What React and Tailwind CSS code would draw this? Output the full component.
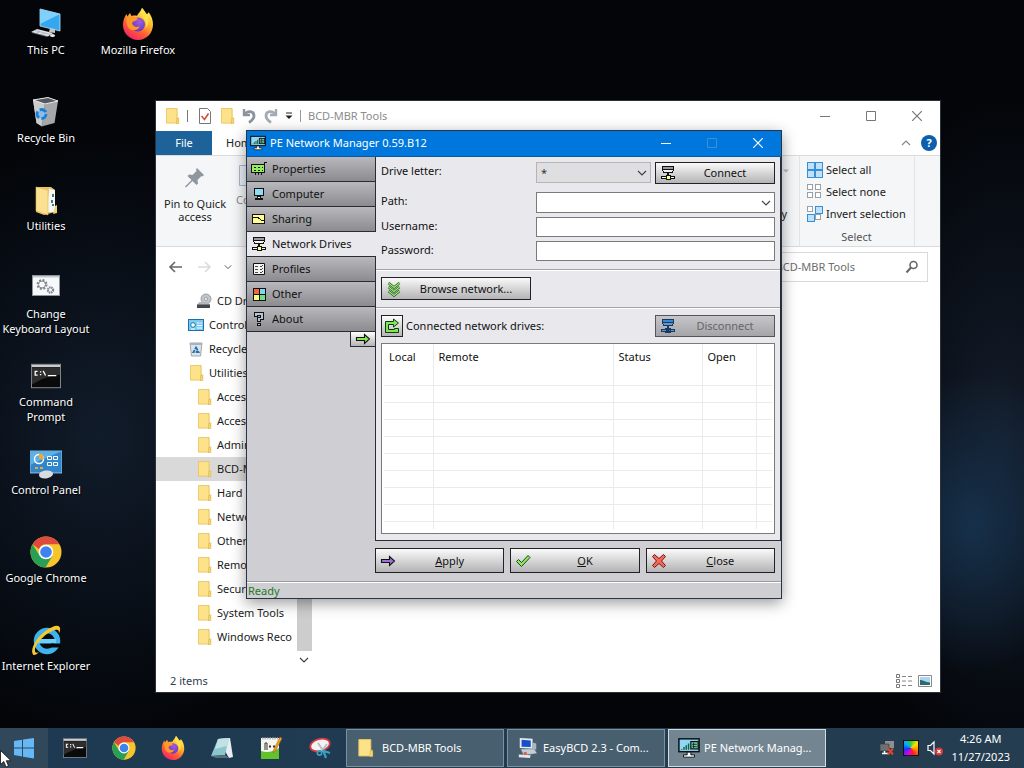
import React from 'react'

/* ---------- shared icons ---------- */

function FolderIcon({ className = 'w-4 h-4' }) {
  return (
    <svg viewBox="0 0 16 16" className={className}>
      <path d="M3 .5h10.500v11H15V15H3z" fill="#f3d36f" />
      <path d="M2.500.500h10.500v14.600h-10.500z" fill="#fde28a" stroke="#e6c35c" strokeWidth=".8" />
      <path d="M13 10h1.800v5.500h-2.600z" fill="#f7d774" stroke="#d9b44c" strokeWidth=".6" />
    </svg>
  )
}

function FirefoxIcon({ className }) {
  return (
    <svg viewBox="0 0 32 32" className={className}>
      <defs>
        <linearGradient id="ffBody" x1=".8" y1=".1" x2=".25" y2="1">
          <stop offset="0" stopColor="#fff14f" />
          <stop offset=".35" stopColor="#ffae2b" />
          <stop offset=".65" stopColor="#ff5a36" />
          <stop offset="1" stopColor="#f0206e" />
        </linearGradient>
        <radialGradient id="ffCore" cx=".6" cy=".3" r=".8">
          <stop offset="0" stopColor="#a05be0" />
          <stop offset="1" stopColor="#5a35b8" />
        </radialGradient>
      </defs>
      <path
        d="M20 0c2 2 3 4 4.500 6 1.500-.2 2-1 2-2 3 4 4.500 8 4.500 12.500C31 25 24.500 32 16 32S1 25 1 17c0-5 1.500-8 3.500-11l.8 2.500L8 5l1.500 3c2-.6 4-.6 5.500-.2C16.500 5 19 3 20 0z"
        fill="url(#ffBody)"
      />
      <circle cx="16" cy="16.500" r="7" fill="url(#ffCore)" />
      <path d="M5 9c3-1 8-1 11 2-2 2-5 2-6 4 1 4 5 5 8 3-2 5-9 6-12 1-1.500-3-2-7-1-10z" fill="#ff9a28" />
      <path d="M20 0c-2 5-1 7 1 10 3 3 4 7 2 11 5-5 4-12 1.500-15C23 4 22 2 20 0z" fill="#ffe14a" />
    </svg>
  )
}

function ChromeIcon({ className }) {
  return (
    <svg viewBox="0 0 32 32" className={className}>
      <circle cx="16" cy="16" r="15.500" fill="#f7c52b" />
      <path d="M2.600 8.200 A15.500 15.500 0 0 0 15.500 31.500 L22.500 19.700 L9.500 19.500z" fill="#27a055" />
      <path d="M2.600 8.200A15.500 15.500 0 0 1 29.400 8.200H16a7.500 7.500 0 0 0-7 5z" fill="#de4b3e" />
      <circle cx="16" cy="16" r="7.300" fill="#fff" />
      <circle cx="16" cy="16" r="5.800" fill="#3f83ee" />
    </svg>
  )
}

function ConsoleIcon({ className }) {
  return (
    <svg viewBox="0 0 32 26" className={className}>
      <rect x=".5" y=".5" width="31" height="25" fill="#0a0a0a" stroke="#8b8f92" />
      <rect x="1" y="1" width="30" height="2.500" fill="#c9cdd0" />
      <path d="M1 4h30v8C20 12 10 17 1 22z" fill="#2e2e2e" />
      <path d="M7 8H4.500v4H7M9.500 8.500H11M9.500 11.500H11M13 7.500l2.500 5M18 12.500h9" stroke="#fff" strokeWidth="1.400" fill="none" />
    </svg>
  )
}

function NetMonitorIcon({ className }) {
  return (
    <svg viewBox="0 0 24 22" className={className}>
      <rect x="1" y="1" width="22" height="14" fill="#8ed8f5" stroke="#0a0f14" strokeWidth="1.600" />
      <path d="M4 12v1M6.500 10v3M9 8v5M11.500 6v7" stroke="#175f3e" strokeWidth="1.600" />
      <rect x="14" y="4" width="8" height="8" fill="#6fc79a" stroke="#0a0f14" strokeWidth="1.300" />
      <path d="M15.500 7h5M15.500 9.500h5M17 5v6" stroke="#0a0f14" strokeWidth=".8" />
      <path d="M10 15.500h4v3h4v2.500H6v-2.500h4z" fill="#fff" stroke="#0a0f14" />
    </svg>
  )
}

function NetDriveIcon({ blue }) {
  const fill = blue ? '#5b9bd5' : '#f2f2f2'
  const line = blue ? '#173a63' : '#111'
  return (
    <svg viewBox="0 0 16 16" className="w-4 h-4 shrink-0" shapeRendering="crispEdges">
      <path d="M2.500 1.500h11v3h-11z" fill={blue ? '#3f86cc' : '#9a9a9e'} stroke={line} />
      <path d="M2.500 4.500h11l-1 3h-9z" fill={fill} stroke={line} />
      <path d="M8 8v3" stroke={line} strokeWidth="2" />
      <path d="M1.500 11.500h13v2h-13z" fill={fill} stroke={line} />
      <path d="M6.500 10.500h4v4h-4z" fill={blue ? '#3d6fb5' : '#ffff90'} stroke={line} />
      {blue && <path d="M5 10l6 5M11 10l-6 5" stroke={line} />}
    </svg>
  )
}

function ArrowIcon({ fill, className = 'w-4 h-4' }) {
  return (
    <svg viewBox="0 0 16 16" className={className}>
      <path d="M1.500 6.500h8V3.500L14.500 8l-5 4.500v-3h-8z" fill={fill} stroke="#111" strokeWidth="1.100" />
    </svg>
  )
}

function Chevron({ className = 'w-2.5 h-2.5', color = '#444' }) {
  return (
    <svg viewBox="0 0 10 10" className={className}>
      <path d="M1 3l4 4 4-4" fill="none" stroke={color} strokeWidth="1.200" />
    </svg>
  )
}

/* ---------- desktop ---------- */

function PcIcon() {
  return (
    <svg viewBox="0 0 32 32" className="w-8 h-8">
      <path d="M10 1l20 5v17L10 18z" fill="#35a7ee" stroke="#bfe3f7" strokeWidth=".8" />
      <path d="M10 1l20 5-20 10z" fill="#7fd0fa" />
      <path d="M20 20l5 1v4l-6-1z" fill="#bfc5cb" />
      <path d="M1 24l6-3 16 4-5 3.500z" fill="#dfe2e6" />
      <path d="M2 24.500l15 4M5 22.500l15 4M6 25.500l4-2M11 27l4-2" stroke="#9aa0a8" strokeWidth=".6" />
      <ellipse cx="22.500" cy="27.500" rx="2.500" ry="1.500" fill="#e8eaec" />
    </svg>
  )
}

function BinIcon({ className = 'w-8 h-8' }) {
  return (
    <svg viewBox="0 0 32 32" className={className}>
      <path d="M3 4l15-2.500L28 5l-3.500 22-13 3.500-5-3.500z" fill="#a4a8ac" />
      <path d="M3 4l12 3.500-3 22.500-5.500-3z" fill="#c9ccce" />
      <path d="M3 4l15-2.500L28 5 15 8z" fill="#55595e" stroke="#e8eaec" strokeWidth="1" />
      <path d="M15 8l-3 22" stroke="#8e9296" strokeWidth=".8" />
      <circle cx="11.500" cy="18" r="4.500" fill="#8dbde6" stroke="#1a7fd4" strokeWidth="2.800" strokeDasharray="7 2.400" />
    </svg>
  )
}

function UtilitiesIcon() {
  return (
    <svg viewBox="0 0 32 32" className="w-8 h-8">
      <path d="M6 3h15l4 3v22l-11 3-8-3z" fill="#e8c466" />
      <path d="M19 5l6 1v22h-8z" fill="#f4f6f8" />
      <path d="M22 10h2v3h-2zM21 16h2v3h-2zM22 20h2v2h-2z" fill="#3d8067" />
      <path d="M6 3l12 3v25L6 27z" fill="#fbe092" stroke="#dcb550" strokeWidth=".6" />
      <path d="M25 22l2-1v8l-4 1z" fill="#f5d270" />
    </svg>
  )
}

function KeyboardLayoutIcon() {
  return (
    <svg viewBox="0 0 32 32" className="w-8 h-8">
      <rect x="2.500" y="3.500" width="27" height="20" fill="#f7f8f9" stroke="#8d949b" />
      <rect x="3" y="4" width="26" height="1.500" fill="#c4cad0" />
      <circle cx="12" cy="12.500" r="4.500" fill="none" stroke="#7e868e" strokeWidth="2" strokeDasharray="2 1.530" />
      <circle cx="12" cy="12.500" r="3.500" fill="none" stroke="#7e868e" />
      <circle cx="20.500" cy="18" r="2.600" fill="none" stroke="#7e868e" strokeWidth="2.200" strokeDasharray="1.500 .6" />
    </svg>
  )
}

function ControlPanelIcon() {
  return (
    <svg viewBox="0 0 32 32" className="w-8 h-8">
      <path d="M0 3h32v22H0z" fill="#2f86cc" stroke="#a5d3ef" strokeWidth=".8" />
      <path d="M0 3h32L0 17z" fill="#5cb0e6" />
      <circle cx="9" cy="11" r="4.500" fill="none" stroke="#fff" strokeWidth="1.400" />
      <path d="M9 11V5.500A5.500 5.500 0 0 1 14 11z" fill="#f5a623" />
      <path d="M17.500 8.500h4v3h-4zM23.500 8.500h4v3h-4zM17.500 14.500h4v3h-4zM23.500 14.500h4v3h-4z" fill="none" stroke="#fff" />
      <path d="M5 20h3M10 20h3" stroke="#f5a623" strokeWidth="2" />
      <path d="M9 27c0-3 4-4.500 8-4.500S23 24 23 26s-4 4.500-8 4.500-6-1.500-6-3.500z" fill="#d9dcdf" />
    </svg>
  )
}

function IeIcon() {
  return (
    <svg viewBox="0 0 32 32" className="w-8 h-8">
      <circle cx="17" cy="17" r="10.500" fill="none" stroke="#3fb4ec" strokeWidth="5.500" />
      <path d="M8 15h18v4.500H8z" fill="#6dd0f8" />
      <path d="M21 19.500h10v4H20z" fill="#06080c" />
      <path d="M3.500 31C-1 27 6 13 17 6c6-4 12-6 13-2 .5 2-.5 4-1 5 0-3-1-4-4-3C17 8 4 20 5 27c0 2 2 2 4 1-2 2-4 3.500-5.500 3z" fill="#f7c92d" />
    </svg>
  )
}

function DesktopIcon({ icon, label }) {
  return (
    <button className="w-[92px] h-[88px] pt-2 flex flex-col items-center text-white [text-shadow:1px_1px_1px_#000]">
      {icon}
      <span className="mt-0.5 leading-[15px] text-center whitespace-pre-line">{label}</span>
    </button>
  )
}

/* ---------- explorer window ---------- */

const navItems = [
  { label: 'CD Drive', icon: 'cd', deep: true },
  { label: 'Control', icon: 'panel' },
  { label: 'Recycle', icon: 'bin' },
  { label: 'Utilities', icon: 'folder' },
  { label: 'Access', icon: 'folder', deep: true },
  { label: 'Access', icon: 'folder', deep: true },
  { label: 'Admin', icon: 'folder', deep: true },
  { label: 'BCD-MBR', icon: 'folder', deep: true, selected: true },
  { label: 'Hard', icon: 'folder', deep: true },
  { label: 'Netwo', icon: 'folder', deep: true },
  { label: 'Other', icon: 'folder', deep: true },
  { label: 'Remo', icon: 'folder', deep: true },
  { label: 'Secur', icon: 'folder', deep: true },
  { label: 'System Tools', icon: 'folder', deep: true },
  { label: 'Windows Reco', icon: 'folder', deep: true },
]

function NavIcon({ name }) {
  if (name === 'cd') {
    return (
      <svg viewBox="0 0 16 16" className="w-4 h-4">
        <circle cx="10" cy="6" r="5" fill="#c3c6c9" stroke="#8a8f94" strokeWidth=".8" />
        <circle cx="10" cy="6" r="1.500" fill="#fff" stroke="#8a8f94" strokeWidth=".8" />
        <path d="M3 9h9l2 3H1z" fill="#b5b9bd" />
        <path d="M1 11.500h13V15H1z" fill="#44484c" />
      </svg>
    )
  }
  if (name === 'panel') {
    return (
      <svg viewBox="0 0 16 16" className="w-4 h-4">
        <rect x=".5" y="2.500" width="15" height="11" fill="#7cc9f2" stroke="#1c6fa8" />
        <circle cx="5" cy="8" r="2.300" fill="#fff" stroke="#1c7c9c" />
        <path d="M9 6h2.500M12.500 6H14M9 8.500h5M9 11h5M3 12h4" stroke="#fff" />
      </svg>
    )
  }
  if (name === 'bin') {
    return (
      <svg viewBox="0 0 16 16" className="w-4 h-4">
        <path d="M2 2h12l-1.500 13h-9z" fill="#dce3ea" stroke="#8b949c" strokeWidth=".8" />
        <path d="M2 2h12l-.3 2H2.300z" fill="#a9b2ba" />
        <path d="M8 6.500L10.500 11h-5z" fill="none" stroke="#2370b5" strokeWidth="1.800" strokeDasharray="3.500 1" />
      </svg>
    )
  }
  return <FolderIcon />
}

function WindowControls({ color, dimMax, height }) {
  const cls = `w-[46px] flex items-center justify-center ${height}`
  return (
    <div className="flex ml-auto">
      <button className={cls} aria-label="Minimize">
        <svg viewBox="0 0 10 10" className="w-2.5 h-2.5"><path d="M0 5.500h10" stroke={color} /></svg>
      </button>
      <button className={cls} aria-label="Maximize">
        <svg viewBox="0 0 10 10" className="w-2.5 h-2.5">
          <path d="M.5.5h9v9h-9z" fill="none" stroke={dimMax ? '#3b8fd9' : color} />
        </svg>
      </button>
      <button className={cls} aria-label="Close">
        <svg viewBox="0 0 10 10" className="w-2.5 h-2.5"><path d="M0 0l10 10M10 0L0 10" stroke={color} strokeWidth="1.200" /></svg>
      </button>
    </div>
  )
}

function Squares({ filled }) {
  const cells = [[1, 1], [9, 1], [1, 9], [9, 9]]
  return (
    <svg viewBox="0 0 16 16" className="w-4 h-4">
      {cells.map(([x, y], i) => (
        <rect
          key={i}
          x={x - 0.5}
          y={y - 0.5}
          width={filled[i] ? 7 : 5}
          height={filled[i] ? 7 : 5}
          fill={filled[i] ? '#bfe1fb' : '#fff'}
          stroke={filled[i] ? '#3a8fd0' : '#9aa0a6'}
        />
      ))}
    </svg>
  )
}

function Explorer() {
  return (
    <section className="absolute left-[156px] top-[101px] w-[784px] h-[591px] flex flex-col bg-white text-[#222] shadow-[0_0_0_1px_#2c3038]">
      {/* Title bar */}
      <div className="flex items-center h-[30px] pl-2 shrink-0">
        <FolderIcon />
        <span className="w-px h-3 bg-[#777] ml-[7px] mr-[9px]" />
        <div className="flex items-center gap-1.5">
          <svg viewBox="0 0 16 16" className="w-4 h-4">
            <path d="M2.500.5h8l3 3v12h-11z" fill="#fff" stroke="#777" />
            <path d="M4.500 8l3 3.500 4-6" fill="none" stroke="#cf4a3c" strokeWidth="1.500" />
          </svg>
          <FolderIcon />
          <svg viewBox="0 0 16 16" className="w-4 h-4">
            <path d="M3 1v6h6" fill="none" stroke="#8b939e" strokeWidth="2.400" />
            <path d="M3.500 6.500C7 2 13 3 13 8c0 3-2 4.500-5 6.500" fill="none" stroke="#8b939e" strokeWidth="2.800" />
          </svg>
          <svg viewBox="0 0 16 16" className="w-4 h-4">
            <path d="M13 1v6H7" fill="none" stroke="#a4abb4" strokeWidth="2.400" />
            <path d="M12.500 6.500C9 2 3 3 3 8c0 3 2 4.500 5 6.500" fill="none" stroke="#a4abb4" strokeWidth="2.800" />
          </svg>
          <svg viewBox="0 0 8 8" className="w-2 h-2">
            <path d="M1 1h6" stroke="#222" />
            <path d="M.5 3.500h7L4 7z" fill="#222" />
          </svg>
        </div>
        <span className="w-px h-3 bg-[#999] mx-[7px]" />
        <h1 className="text-[#8c8c8c]">BCD-MBR Tools</h1>
        <WindowControls color="#777" height="h-[30px]" />
      </div>

      {/* Ribbon tabs */}
      <div className="flex items-center h-6 shrink-0">
        <button className="w-14 h-6 bg-[#1d6299] text-white">File</button>
        <button className="px-3.5 h-6">Home</button>
        <div className="flex items-center gap-2.5 ml-auto pr-[3px]">
          <Chevron className="w-2.5 h-2.5 rotate-180" color="#888" />
          <button className="w-4 h-4 rounded-full bg-[#0d5fae] text-white font-bold leading-4" aria-label="Help">?</button>
        </div>
      </div>

      {/* Ribbon */}
      <div className="flex h-[92px] shrink-0 bg-[#f5f6f7] border-y border-[#dadbdc]">
        <button className="w-[78px] pt-2.5 flex flex-col items-center leading-[13px]">
          <svg viewBox="0 0 24 24" className="w-6 h-6 mb-[7px]">
            <path d="M14 2l7 7-1.500 1.500-1-.5-4 4 .5 3.500L13.500 19 9.500 15 3 21.500l-1-1L8.500 14 4.500 10 6 8.500l3.500.500 4-4-.5-1.500z" fill="#8e979f" />
          </svg>
          Pin to Quick<br />access
        </button>
        <button className="pl-0.5 pt-2 flex flex-col items-start text-[#888]">
          <svg viewBox="0 0 20 24" className="w-5 h-6 ml-0.5 mb-1"><path d="M1.500 1.500h13l4 4v16h-17z" fill="#eaf0f6" stroke="#a9b8c8" /></svg>
          Copy
        </button>
        <div className="ml-auto w-[14px] pt-2 flex flex-col items-end justify-between pb-6">
          <svg viewBox="0 0 8 8" className="w-1.5 h-1.5 mt-1 -mr-0.5"><path d="M0 2h8L4 6z" fill="#bbb" /></svg>
          <span>History</span>
        </div>
        <div className="ml-3 w-[116px] border-x border-[#e2e3e4] pt-[3px] pl-[7px]">
          <button className="flex items-center gap-[3px] h-[22px]"><Squares filled={[1, 1, 1, 1]} />Select all</button>
          <button className="flex items-center gap-[3px] h-[22px]"><Squares filled={[0, 0, 0, 0]} />Select none</button>
          <button className="flex items-center gap-[3px] h-[22px]"><Squares filled={[0, 1, 1, 0]} />Invert selection</button>
          <div className="pt-1 pr-2 text-center text-[#555]">Select</div>
        </div>
        <div className="w-[25px]" />
      </div>

      {/* Address row */}
      <div className="flex items-center h-10 shrink-0 pl-3 pr-3">
        <svg viewBox="0 0 16 16" className="w-4 h-4 mr-3">
          <path d="M14 8H2M7 3L2 8l5 5" fill="none" stroke="#666" strokeWidth="1.600" />
        </svg>
        <svg viewBox="0 0 16 16" className="w-4 h-4 mr-3">
          <path d="M2 8h12M9 3l5 5-5 5" fill="none" stroke="#dcdcdc" strokeWidth="1.600" />
        </svg>
        <Chevron className="w-2 h-2" color="#555" />
        <div className="ml-auto flex items-center w-[216px] h-[30px] border border-[#d9d9d9] pl-[25px] pr-2">
          <input type="search" aria-label="Search BCD-MBR Tools" placeholder="Search BCD-MBR Tools" className="flex-1 min-w-0 outline-none placeholder:text-[#6d6d6d]" />
          <svg viewBox="0 0 14 14" className="w-3.5 h-3.5">
            <circle cx="8.500" cy="5" r="3.500" fill="none" stroke="#666" strokeWidth="1.600" />
            <path d="M6 7.500L1.500 12.500" stroke="#666" strokeWidth="2" />
          </svg>
        </div>
      </div>

      {/* Body */}
      <div className="flex flex-1 min-h-0">
        <ul className="w-[140px] pt-0.5 text-[#1b1b1b]">
          {navItems.map((item, i) => (
            <li
              key={i}
              className={`flex items-center gap-[5px] h-6 whitespace-nowrap ${item.deep ? 'pl-10' : 'pl-8'} ${item.selected ? 'bg-[#d9d9d9]' : ''}`}
            >
              <span className="shrink-0"><NavIcon name={item.icon} /></span>
              {item.label}
            </li>
          ))}
        </ul>
        <div className="w-4 flex flex-col items-center pt-4">
          <div className="w-[15px] flex-1 bg-[#cdcdcd]" />
          <Chevron className="w-2.5 h-[18px]" color="#444" />
        </div>
      </div>

      {/* Status bar */}
      <div className="flex items-center h-[23px] shrink-0 pl-[14px] pr-2 text-[#333c50]">
        2 items
        <svg viewBox="0 0 16 14" className="w-4 h-3.5 ml-auto mr-1.5">
          <path d="M.5.500h3v3h-3zM.5 5.500h3v3h-3zM.5 10.500h3v3h-3z" fill="none" stroke="#777" />
          <path d="M6 2.500h4M12 2.500h4M6 7h4M12 7h4M6 11.500h4M12 11.500h4" stroke="#888" />
        </svg>
        <svg viewBox="0 0 14 12" className="w-3.5 h-3">
          <path d="M.5.500h13v11H.5z" fill="#fff" stroke="#888" />
          <path d="M2 2h10v8H2z" fill="#a9d5f2" />
          <path d="M2 5c3 0 5 2 10 2.500V10H2z" fill="#2c6b6f" />
        </svg>
      </div>
    </section>
  )
}

/* ---------- network manager dialog ---------- */

const tabIcons = {
  Properties: (
    <svg viewBox="0 0 16 16" className="w-4 h-4" shapeRendering="crispEdges">
      <path d="M.5 3.500h13v8H.5z" fill="#90ee60" stroke="#111" />
      <path d="M13.500 3.500v-2h2M4.500 12v2M7.500 12v2M10.500 12v2M3 6.500h2M7 6.500h2M11 6.500h1M3 9.500h2M7 9.500h2M11 9.500h1" stroke="#111" fill="none" />
    </svg>
  ),
  Computer: (
    <svg viewBox="0 0 16 16" className="w-4 h-4" shapeRendering="crispEdges">
      <path d="M3.500 2.500h9v7h-9z" fill="#8fdcf5" stroke="#111" />
      <path d="M6.500 10.500h3v2h-3zM4.500 12.500h7v1h-7z" fill="#fff" stroke="#111" />
    </svg>
  ),
  Sharing: (
    <svg viewBox="0 0 16 16" className="w-4 h-4" shapeRendering="crispEdges">
      <path d="M1.500 3.500h12v9h-12z" fill="#ffff90" stroke="#111" />
      <path d="M2 6.500h5l4 3h3" fill="none" stroke="#111" />
    </svg>
  ),
  'Network Drives': <NetDriveIcon />,
  Profiles: (
    <svg viewBox="0 0 16 16" className="w-4 h-4">
      <path d="M2.500 2.500h11v11h-11z" fill="#f4f4f0" stroke="#111" />
      <path d="M4 5.500h3M4 8.500h3M4 11.500h3M9 5l1 1 2-2M9 8l1 1 2-2M9 11l1 1 2-2" fill="none" stroke="#333" strokeWidth=".9" />
    </svg>
  ),
  Other: (
    <svg viewBox="0 0 16 16" className="w-4 h-4" shapeRendering="crispEdges">
      <path d="M2 2h6v6H2z" fill="#f0683c" />
      <path d="M8 2h6v6H8z" fill="#7fd4f2" />
      <path d="M2 8h6v6H2z" fill="#ffff80" />
      <path d="M8 8h6v6H8z" fill="#6fe080" />
      <path d="M2.500 2.500h12v12h-12zM8.500 2v12M2 8.500h12" fill="none" stroke="#111" />
    </svg>
  ),
  About: (
    <svg viewBox="0 0 16 16" className="w-4 h-4" shapeRendering="crispEdges">
      <path d="M3.500 1.500h9v7h-3v2h-3v-4h3v-2h-3v1h-3z" fill="#b4c6dc" stroke="#111" />
      <path d="M6.500 12.500h3v2h-3z" fill="#b4c6dc" stroke="#111" />
    </svg>
  ),
}

const tabs = ['Properties', 'Computer', 'Sharing', 'Network Drives', 'Profiles', 'Other', 'About']

function PushButton({ icon, children, className, disabled }) {
  return (
    <button
      disabled={disabled}
      className={`flex items-center pl-1 border ${disabled ? 'border-[#555] text-[#666] from-[#c6c6ca] to-[#a5a5a9]' : 'border-[#222] text-[#111] from-[#fafafa] to-[#b4b4b6]'} bg-linear-to-b ${className}`}
    >
      {icon}
      <span className="flex-1 text-center">{children}</span>
    </button>
  )
}

const fieldClass = 'flex-1 min-w-0 border border-[#7a7a7a] bg-white outline-none px-1'
const labelClass = 'w-[155px] shrink-0 leading-[18px]'

function Dialog() {
  const columns = ['Local', 'Remote', 'Status', 'Open', '']
  return (
    <section className="absolute left-[246px] top-[130px] w-[536px] h-[469px] flex flex-col bg-[#cfced3] border border-[#26334a] text-[#111] shadow-[0_4px_14px_rgba(0,0,0,0.4)]">
      <div className="flex items-center h-[26px] pl-[3px] pb-px shrink-0 bg-[#0077dc] border-b border-[#10579c] text-white">
        <NetMonitorIcon className="w-4 h-4 mr-1" />
        <h2>PE Network Manager 0.59.B12</h2>
        <WindowControls color="#fff" dimMax height="h-6" />
      </div>

      <div className="flex flex-1 min-h-0">
        {/* Tabs */}
        <nav className="w-[129px] shrink-0 flex flex-col">
          {tabs.map((tab) => (
            <button
              key={tab}
              className={`flex items-center gap-[5px] h-[25px] shrink-0 pl-1 border-b border-[#2b2b35] ${tab === 'Network Drives' ? 'bg-[#e9e8ed]' : 'border-r bg-linear-to-b from-[#b9b8bd] to-[#8c8b90]'}`}
            >
              {tabIcons[tab]}
              {tab}
            </button>
          ))}
          <div className="flex-1 border-r border-[#2b2b35] flex justify-end items-start">
            <button className="w-[25px] h-[15px] border-l border-b border-[#2b2b35] bg-linear-to-b from-white to-[#b4b4b6] flex items-center justify-center" aria-label="Next">
              <ArrowIcon fill="#86e84e" className="w-4 h-4" />
            </button>
          </div>
        </nav>

        {/* Page */}
        <div className="flex-1 min-w-0 flex flex-col bg-[#e9e8ed] border-r border-b border-[#2b2b35]">
          <div className="px-[5px] pt-[5px] pb-2 border-b border-[#a3a3a8]">
            <div className="flex items-start h-[22px]">
              <label htmlFor="drive" className={labelClass}>Drive letter:</label>
              <div className="relative flex-1 mr-1">
                <select id="drive" disabled className="appearance-none w-full h-[21px] px-1 border border-[#b5b5b8] bg-[#dfdfe2] text-[#333] opacity-100">
                  <option>*</option>
                </select>
                <span className="absolute right-1 top-1.5 pointer-events-none"><Chevron /></span>
              </div>
              <PushButton icon={<NetDriveIcon />} className="w-[120px] h-[22px]">Connect</PushButton>
            </div>
            <div className="flex items-start mt-2 h-[21px]">
              <label htmlFor="path" className={labelClass}>Path:</label>
              <div className="flex flex-1 h-[21px] items-center border border-[#7a7a7a] bg-white">
                <input id="path" className="flex-1 min-w-0 px-1 outline-none" />
                <button className="px-[3px]" aria-label="Show paths"><Chevron /></button>
              </div>
            </div>
            <div className="flex items-start mt-1">
              <label htmlFor="user" className={labelClass}>Username:</label>
              <input id="user" className={`${fieldClass} h-5`} />
            </div>
            <div className="flex items-start mt-1">
              <label htmlFor="pass" className={labelClass}>Password:</label>
              <input id="pass" type="password" className={`${fieldClass} h-5`} />
            </div>
          </div>

          <div className="border-t border-t-white border-b border-b-[#a3a3a8] px-[5px] pt-1.5 pb-[7px]">
            <PushButton
              className="w-[150px] h-[23px]"
              icon={
                <svg viewBox="0 0 16 16" className="w-4 h-4">
                  <path d="M2.500 2l5.500 4.500L13.500 2M2.500 6l5.500 4.500L13.500 6M2.500 10l5.500 4.500 5.500-4.500" fill="none" stroke="#1d4a12" strokeWidth="2.400" />
                  <path d="M2.500 2l5.500 4.500L13.500 2M2.500 6l5.500 4.500L13.500 6M2.500 10l5.500 4.500 5.500-4.500" fill="none" stroke="#9cf576" strokeWidth="1.200" />
                </svg>
              }
            >
              Browse network...
            </PushButton>
          </div>

          <div className="border-t border-white px-[5px] py-1.5 flex-1 min-h-0 flex flex-col">
            <div className="flex items-center mb-1.5">
              <button className="w-[22px] h-[22px] border border-[#222] bg-linear-to-b from-white to-[#b4b4b6] flex items-center justify-center" aria-label="Refresh">
                <svg viewBox="0 0 16 16" className="w-4 h-4">
                  <path d="M1.500 3.500h8v-2.500l5 4-5 4V6.500h-5v5h6v-1h4v4h-13z" fill="#7fe85a" stroke="#123a0c" />
                </svg>
              </button>
              <span className="ml-[3px]">Connected network drives:</span>
              <PushButton disabled icon={<NetDriveIcon blue />} className="ml-auto w-[120px] h-[22px]">Disconnect</PushButton>
            </div>
            <div className="flex-1 min-h-0 border border-[#7a7a7a] bg-white px-0.5">
              <table className="w-full table-fixed border-collapse">
                <colgroup>
                  <col className="w-[49px]" />
                  <col className="w-[180px]" />
                  <col className="w-[89px]" />
                  <col className="w-[54px]" />
                  <col />
                </colgroup>
                <thead>
                  <tr className="h-6">
                    {columns.map((name, i) => (
                      <th key={i} className="p-0 pt-0.5 pl-[5px] text-left font-normal border-r border-[#ebebeb] last:border-r-0">{name}</th>
                    ))}
                  </tr>
                </thead>
                <tbody>
                  {Array.from({ length: 10 }, (_, row) => (
                    <tr key={row} className="h-[17px] border-b border-[#ebebeb] last:h-2 last:border-b-0">
                      {columns.map((_, i) => (
                        <td key={i} className="p-0 border-r border-[#ebebeb] last:border-r-0" />
                      ))}
                    </tr>
                  ))}
                </tbody>
              </table>
            </div>
          </div>
        </div>
      </div>

      {/* Buttons */}
      <div className="flex gap-1.5 pl-32 pr-1.5 pt-[7px] pb-2 border-b border-[#9b9b9f]">
        <PushButton className="flex-1 h-[25px]" icon={<ArrowIcon fill="#a070d8" />}><u>A</u>pply</PushButton>
        <PushButton
          className="flex-1 h-[25px]"
          icon={
            <svg viewBox="0 0 16 16" className="w-4 h-4">
              <path d="M1.500 8.500l2-2 3 3 6.500-7 2 2-8.500 9z" fill="#8be863" stroke="#1d4a12" />
            </svg>
          }
        >
          <u>O</u>K
        </PushButton>
        <PushButton
          className="flex-1 h-[25px]"
          icon={
            <svg viewBox="0 0 16 16" className="w-4 h-4">
              <path d="M1.500 3.500l2-2 4.500 4 4.500-4 2 2-4 4.500 4 4.500-2 2-4.500-4-4.500 4-2-2 4-4.500z" fill="#f4685a" stroke="#7a1410" />
            </svg>
          }
        >
          <u>C</u>lose
        </PushButton>
      </div>
      <div className="h-4 pl-px border-t border-white leading-4 text-[#1c7a24]">Ready</div>
    </section>
  )
}

/* ---------- taskbar ---------- */

function TaskButton({ icon, children, active }) {
  return (
    <button
      className={`w-[158px] h-[38px] flex items-center gap-1 pl-[9px] border ${active ? 'bg-[#748592] border-[#d3dbe1]' : 'bg-[#485f70] border-[#7c909e]'}`}
    >
      <span className="w-[22px] shrink-0">{icon}</span>
      <span>{children}</span>
    </button>
  )
}

function Taskbar() {
  return (
    <footer className="relative flex items-center h-10 shrink-0 bg-linear-to-r from-[#1d3a52] to-[#253d50] text-white">
      <button className="w-12 h-10 flex items-center justify-center bg-[#31475a]" aria-label="Start">
        <svg viewBox="0 0 22 22" className="w-[22px] h-[22px]">
          <path d="M1 4l8-1.300V10.500H1zM10 2.500L21 1v9.500H10zM1 11.500h8v8L1 18zM10 11.500h11V21.500L10 19.800z" fill="#66b7f5" />
        </svg>
      </button>
      <div className="flex items-center pl-0.5">
        <button className="w-[49px] flex justify-center" aria-label="Command Prompt"><ConsoleIcon className="w-6 h-5" /></button>
        <button className="w-[49px] flex justify-center" aria-label="Google Chrome"><ChromeIcon className="w-6 h-6" /></button>
        <button className="w-[49px] flex justify-center" aria-label="Mozilla Firefox"><FirefoxIcon className="w-6 h-6" /></button>
        <button className="w-[49px] flex justify-center" aria-label="Notepad">
          <svg viewBox="0 0 24 24" className="w-6 h-6">
            <path d="M8 3l12-1 3 19-4 1z" fill="#e8eef0" />
            <path d="M8 3l11-1-4 17-14 1z" fill="#8cc5ce" />
            <path d="M8 3l11-1-2 8-12 3z" fill="#bfe2e6" />
            <path d="M1 20l14-1 4 3H6z" fill="#55727c" />
          </svg>
        </button>
        <button className="w-[49px] flex justify-center" aria-label="Notepad++">
          <svg viewBox="0 0 24 24" className="w-6 h-6">
            <path d="M2 2h18v21H2z" fill="#f4f7ee" />
            <path d="M2 15c6 2 12 1 18-3v11H2z" fill="#63c22c" />
            <path d="M6 7v7M6 7h2v7M10 10.500h2M11 9v3M14 10.500h2M15 9v3" stroke="#333" fill="none" />
            <path d="M3 2.500h16" stroke="#bbb" strokeWidth="2" strokeDasharray="1.500 1" />
            <path d="M21 1l2 1.500-7 13-2 1 .3-2z" fill="#f0a328" stroke="#a65a12" strokeWidth=".6" />
          </svg>
        </button>
        <button className="w-[49px] flex justify-center" aria-label="Snipping Tool">
          <svg viewBox="0 0 24 24" className="w-6 h-6">
            <ellipse cx="12" cy="9" rx="10" ry="6" transform="rotate(-14 12 9)" fill="#f6f2f3" stroke="#d33a45" strokeWidth="1.800" />
            <path d="M10 7l6 9M19 8l-6 8" stroke="#b3bdc4" strokeWidth="1.800" />
            <circle cx="11.500" cy="17" r="2.200" fill="none" stroke="#3b9fc0" strokeWidth="1.700" />
            <path d="M15 14l3 8M16 15l6 2" stroke="#3b9fc0" strokeWidth="2.200" />
          </svg>
        </button>
      </div>
      <div className="flex gap-[3px] ml-0.5">
        <TaskButton icon={<FolderIcon className="w-[18px] h-5" />}>BCD-MBR Tools</TaskButton>
        <TaskButton
          icon={
            <svg viewBox="0 0 24 24" className="w-[22px] h-6">
              <path d="M3 1l14 1v11L3 12z" fill="#e8ecf0" />
              <path d="M5 3l10 .7v7.300L5 10.500z" fill="#1450c8" />
              <path d="M4 13l15 0 3 5-15 2z" fill="#c5cdd6" stroke="#5b6773" strokeWidth=".6" />
              <path d="M2 19l13 1-1 3-12-1z" fill="#e6eaee" />
              <path d="M17 6l4 1v7l-4-1z" fill="#aab6c2" />
              <circle cx="9" cy="18" r="2" fill="#d06a4a" />
            </svg>
          }
        >
          EasyBCD 2.3 - Com...
        </TaskButton>
        <TaskButton active icon={<NetMonitorIcon className="w-[22px] h-[22px]" />}>PE Network Manag...</TaskButton>
      </div>

      {/* Tray */}
      <div className="flex items-center gap-2 ml-auto pr-3.5">
        <svg viewBox="0 0 16 16" className="w-4 h-4">
          <path d="M6 1h9v7H6z" fill="#8d8f92" />
          <path d="M1 4h9v7H1z" fill="#6d7074" stroke="#333" strokeWidth=".6" />
          <path d="M3 13.500h6M5.500 11v2" stroke="#fff" strokeWidth="1.500" />
          <path d="M9 8.500l5 6M14 8.500l-5 6" stroke="#e0442a" strokeWidth="2" />
        </svg>
        <div className="w-4 h-4 border border-[#111] bg-[conic-gradient(from_0deg,#30d030,#ffe000,#ff9000,#ff2020,#e000e0,#2030ff,#00b0ff,#30d030)]" />
        <svg viewBox="0 0 16 16" className="w-4 h-4">
          <path d="M1 5.500h2.500L7 2v12L3.500 10.500H1z" fill="none" stroke="#fff" strokeWidth="1.200" />
          <circle cx="12" cy="11.500" r="4" fill="#d8363a" />
          <path d="M10.500 10l3 3M13.500 10l-3 3" stroke="#fff" strokeWidth="1.200" />
        </svg>
        <div className="leading-[18px] text-center">
          4:26 AM<br />11/27/2023
        </div>
      </div>

      {/* Mouse pointer */}
      <svg viewBox="0 0 12 18" className="absolute left-0 top-[22px] w-3 h-[18px]">
        <path d="M.5.500v14l3.300-3 2.200 5.500 2.500-1-2.200-5.300H11z" fill="#fff" stroke="#111" strokeWidth=".8" />
      </svg>
    </footer>
  )
}

export default function App() {
  return (
    <div className="h-screen flex flex-col overflow-hidden text-[11px] leading-4 font-['Noto_Sans',sans-serif] bg-[#030509]">
      <main className="relative flex-1 min-h-0 bg-[radial-gradient(ellipse_240px_300px_at_10%_60%,#111c2b,transparent),radial-gradient(ellipse_110px_150px_at_95%_72%,#16304a,transparent),radial-gradient(ellipse_160px_340px_at_98%_60%,#141d2b,transparent)]">
        <div className="flex items-start">
          <div className="flex flex-col">
            <DesktopIcon icon={<PcIcon />} label="This PC" />
            <DesktopIcon icon={<BinIcon />} label="Recycle Bin" />
            <DesktopIcon icon={<UtilitiesIcon />} label="Utilities" />
            <DesktopIcon icon={<KeyboardLayoutIcon />} label={'Change\nKeyboard Layout'} />
            <DesktopIcon icon={<span className="h-8 flex items-center"><ConsoleIcon className="w-[30px] h-[26px]" /></span>} label={'Command\nPrompt'} />
            <DesktopIcon icon={<ControlPanelIcon />} label="Control Panel" />
            <DesktopIcon icon={<ChromeIcon className="w-8 h-8" />} label="Google Chrome" />
            <DesktopIcon icon={<IeIcon />} label="Internet Explorer" />
          </div>
          <DesktopIcon icon={<FirefoxIcon className="w-8 h-8" />} label="Mozilla Firefox" />
        </div>
        <Explorer />
        <Dialog />
      </main>
      <Taskbar />
    </div>
  )
}
